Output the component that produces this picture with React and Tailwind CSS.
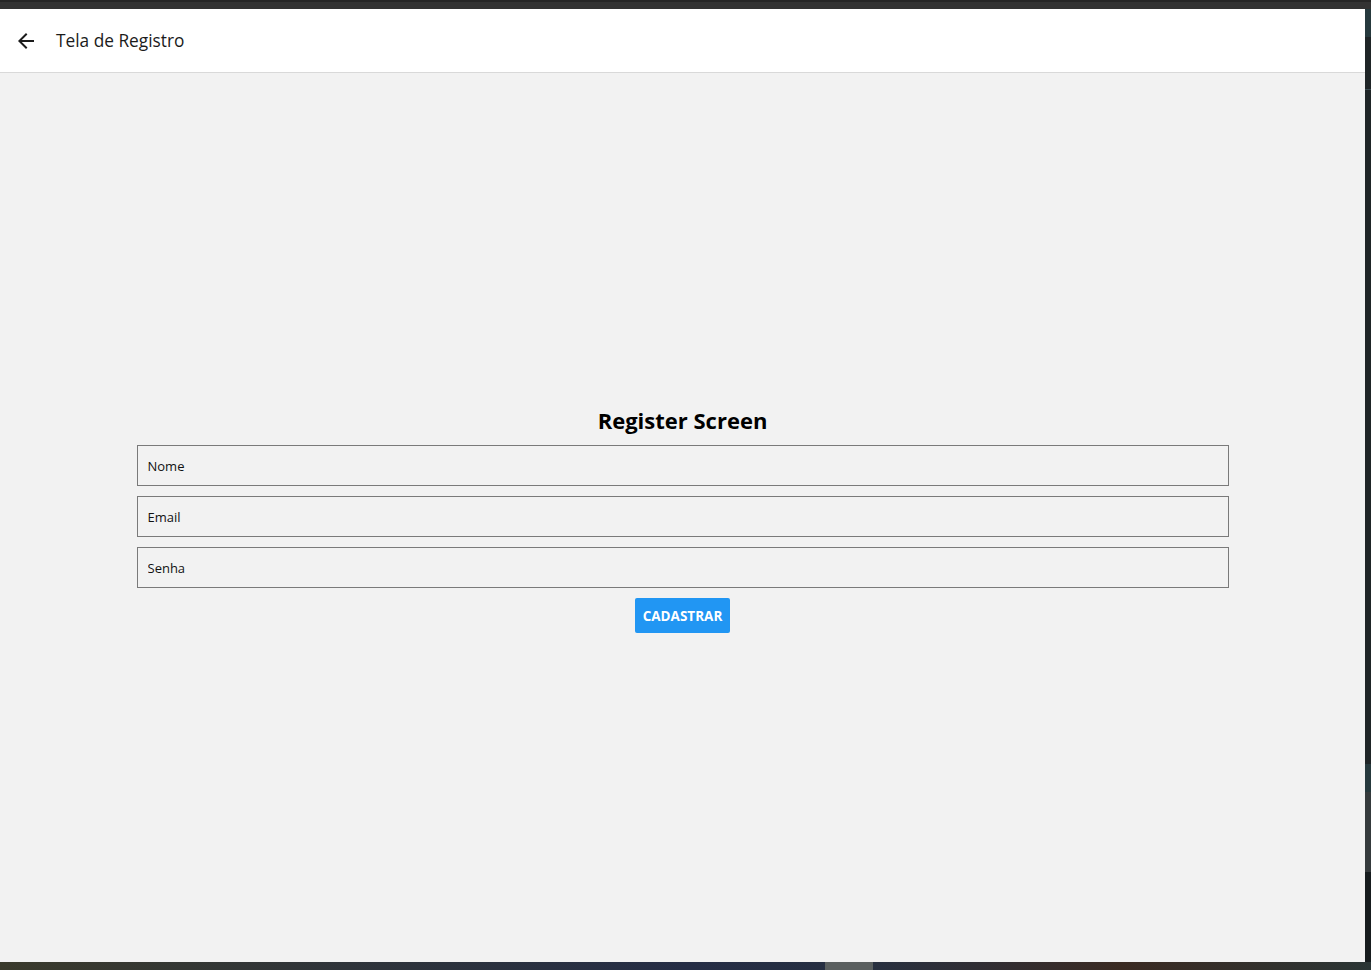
import { MdArrowBack } from "react-icons/md";

const font = { fontFamily: '"Open Sans", "Noto Sans", sans-serif' };

function Field({ placeholder }) {
    return (
        <input
            type="text"
            placeholder={placeholder}
            className="w-full h-[41px] border border-[#7a7a7a] bg-transparent px-[10px] pt-[2px] text-[13px] text-black placeholder:text-[#111] outline-none"
        />
    );
}

export default function App() {
    return (
        <div className="h-screen flex flex-col bg-[#2b2b2b] overflow-hidden" style={font}>
            {/* window top edge */}
            <div className="h-[9px] bg-[#333333] border-t-2 border-[#262626] shrink-0" />

            <div className="flex-1 flex min-h-0">
                <div className="flex-1 flex flex-col min-w-0">
                    {/* HEADER */}
                    <header className="h-[64px] shrink-0 bg-white border-b border-[#d9d9d9] flex items-center">
                        <MdArrowBack className="ml-[14px] text-[#1b1b1b]" size={24} />
                        <span className="ml-[18px] text-[17.3px] text-[#1b1b1b] leading-none">Tela de Registro</span>
                    </header>

                    {/* FORM */}
                    <main className="flex-1 bg-[#f2f2f2] flex flex-col items-center justify-center pt-[1px]">
                        <h1 className="text-[22px] font-bold text-black leading-[32px] mb-[9px]">Register Screen</h1>
                        <div className="w-4/5 flex flex-col gap-[10px]">
                            <Field placeholder="Nome" />
                            <Field placeholder="Email" />
                            <Field placeholder="Senha" />
                        </div>
                        <button className="mt-[10px] h-[35px] px-[8px] pt-[2px] bg-[#2196f3] text-white text-[13.5px] font-bold rounded-[2px]">
                            CADASTRAR
                        </button>
                    </main>
                </div>

                {/* desktop edge on the right */}
                <div className="w-[6px] shrink-0 bg-[#1f2527] flex flex-col">
                    <div className="h-[28px] bg-[#26393d]" />
                    <div className="h-[52px]" />
                    <div className="h-px bg-[#3a4a50]" />
                    <div className="flex-1" />
                    <div className="h-[28px] bg-[#26393d]" />
                    <div className="h-[80px] bg-[#353a3c]" />
                    <div className="h-[90px] bg-[#171c1e]" />
                </div>
            </div>

            {/* taskbar edge */}
            <div className="h-[8px] shrink-0 flex bg-gradient-to-r from-[#3a3a2c] via-[#252d45] to-[#2a3434]">
                <div className="w-[825px]" />
                <div className="w-[48px] bg-[#5a5f5f]" />
                <div className="flex-1 bg-gradient-to-r from-[#283040] via-[#3a2a22] to-[#2a3535]" />
            </div>
        </div>
    );
}
